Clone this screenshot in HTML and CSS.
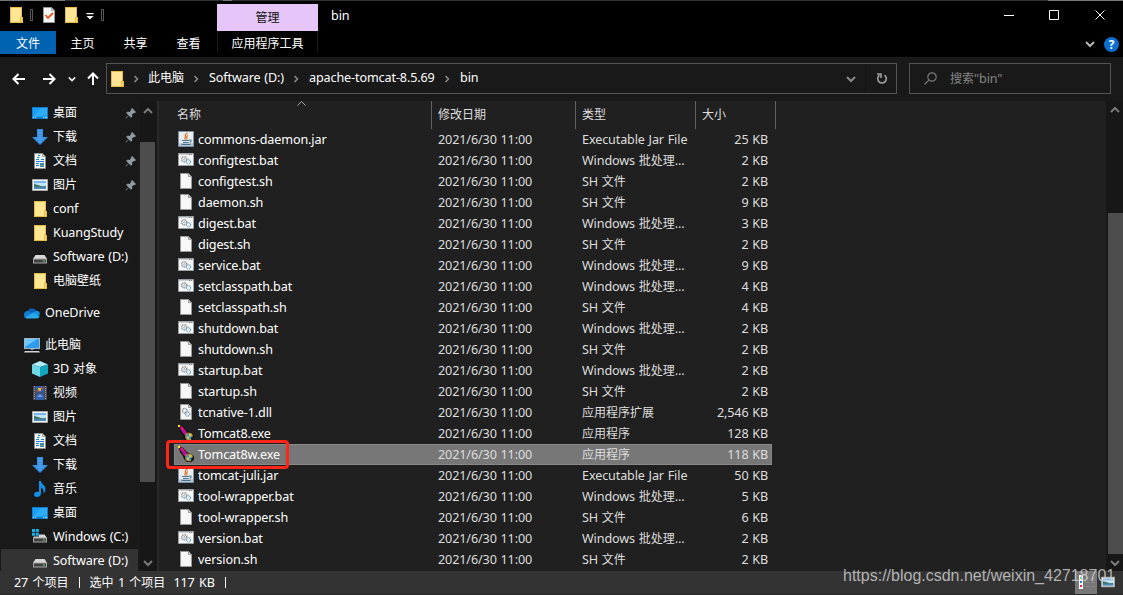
FILE: index.html
```html
<!DOCTYPE html>
<html lang="zh-CN">
<head>
<meta charset="utf-8">
<title>bin</title>
<link rel="stylesheet" href="styles.css">
</head>
<body>
<svg class="defs" width="0" height="0">
  <symbol id="folder" viewBox="0 0 16 16"><path fill="#e8bd3f" d="M2 0h12v10h1v6H2z"/><path fill="#ffe596" d="M3 1h10v9h-1v5H3z"/><path fill="#ffda65" d="M13 11h1v4h-1z"/></symbol>
  <symbol id="desktop" viewBox="0 0 16 16"><path fill="#0f7bd0" d="M0 2h16v12H0z"/><path fill="#16a0fb" d="M1 3h14v9H1z"/><path fill="#46b5ff" d="M9 3h6v7L1 12z" opacity=".5"/><path fill="#c9edff" d="M1 12h1v1H1zM3 12h1v1H3zM11 12h1v1h-1zM13 12h2v1h-2z"/></symbol>
  <symbol id="download" viewBox="0 0 16 16"><path fill="#338fe0" d="M5 0h6v8h5l-8 8-8-8h5z"/><path fill="#4aa2ef" d="M6 1h4v8h3l-5 5-5-5h3z" opacity=".6"/></symbol>
  <symbol id="document" viewBox="0 0 16 16"><path fill="#f7f8f9" stroke="#8b8f92" d="M2.500.500h8l3 3v12h-11z"/><path fill="#cdd1d4" stroke="#8b8f92" stroke-width=".7" d="M10.500.500v3h3z"/><path stroke="#1584d8" d="M6 2.500h2M5 4.500h2.500M4 6.500h3M9 6.500h3M4 8.500h8M4 10.500h3M4 12.500h3"/><path fill="#3e87a8" d="M8 10h4v4H8z"/><path stroke="#64a86d" d="M8 12.500h4"/></symbol>
  <symbol id="picture" viewBox="0 0 16 16"><path fill="#f4f4f4" stroke="#a9a9a9" d="M.500 2.500h15v11H.500z"/><path fill="#78b5ec" d="M2 4h12v8H2z"/><path fill="#c4e4fb" d="M3 6h11v3H2z"/><path fill="#3c7768" d="M2 7l4 1 4 1.500 4-.500v1.500H2z"/><path fill="#4d87b5" d="M2 10h12v2H2z"/></symbol>
  <symbol id="drive" viewBox="0 0 16 16"><path fill="#d8d8d8" d="M3.500 6h9L15 10H1z"/><path fill="#a6a6a6" d="M1 9.500h14v5H1z"/><path fill="#404040" d="M2 10.500h12v3H2z"/><path fill="#4ee05d" d="M11 11.500h2v1h-2z"/></symbol>
  <symbol id="windrive" viewBox="0 0 16 16"><path fill="#15b2ee" d="M0 0h3v3H0zM3.800 0h3v3h-3zM0 3.800h3v3H0zM3.800 3.800h3v3h-3z"/><path fill="#d8d8d8" d="M7 5.500h5.500L15 9H1l1-1.500h5z"/><path fill="#a6a6a6" d="M1 8.500h14v5H1z"/><path fill="#404040" d="M2 9.500h12v3H2z"/><path fill="#4ee05d" d="M11 10.500h2v1h-2z"/></symbol>
  <symbol id="onedrive" viewBox="0 0 16 16"><path fill="#0961b6" d="M3.500 6A5 5 0 0 1 12.500 6L8 10z"/><path fill="#127cd6" d="M0 10a3.600 3.600 0 0 1 3.500-4L10 9l-6 4.500H3.500A3.500 3.500 0 0 1 0 10z"/><path fill="#1490df" d="M8 8l4.500-2.200A3.700 3.700 0 0 1 16 9.500l-4 2z"/><path fill="#29a8ea" d="M1.200 12.500L9 7.800l6.500 3.200c0 1.600-1 2.500-2.500 2.500H3.500c-1 0-1.800-.400-2.300-1z"/></symbol>
  <symbol id="pc" viewBox="0 0 16 16"><path fill="#a6b6c1" d="M0 1h16v11H0z"/><path fill="#2c9bf0" d="M1 2h14v9H1z"/><path fill="#6cc8ff" d="M1 2h12L1 10z"/><path fill="#8b9aa5" d="M6.500 12h3v1h-3z"/><path fill="#cbd5dc" d="M1 14h14l1 1.500H0z"/></symbol>
  <symbol id="cube" viewBox="0 0 16 16"><path fill="#b2edf5" d="M0 3.500L8 0l8 3.500L8 6z"/><path fill="#6fd8e6" d="M0 3.500L8 6v10l-8-3.500z"/><path fill="#10a6bd" d="M16 3.500L8 6v10l8-3.500z"/></symbol>
  <symbol id="video" viewBox="0 0 16 16"><path fill="#47494c" d="M1 1h14v14H1z"/><path fill="#315fae" d="M4 1h8v6.500H4zM4 8.500h8V15H4z"/><path fill="#e2b92b" d="M6 3h3v3H6z"/><path fill="#c34a34" d="M9 2h2v2H9zM5 5h2v2H5z"/><path fill="#7898df" d="M5 12l3-3 3 3z"/><path stroke="#a0a0a0" stroke-dasharray="1 1" d="M2.500 1v14M13.500 1v14"/></symbol>
  <symbol id="music" viewBox="0 0 16 16"><path fill="#168fe9" d="M7 0h2c0 3 4.500 4 4.500 8 0 2-1 3.500-2 4.500.600-3-.500-5-2.500-6V12c0 2.500-1.500 4-4 4-2 0-3-1.200-3-2.500C2 11.500 4.500 10 7 11z"/></symbol>
  <symbol id="jar" viewBox="0 0 16 16"><path fill="#e8edf0" stroke="#7c91a3" d="M.500.500h15v15H.500z"/><path fill="#b9c8d2" d="M1 12h14v3H1z"/><path fill="none" stroke="#e27829" stroke-width="1.300" d="M9.500 2C5 4.500 9 5.500 6.500 8.500M10 4.500C7 6 10 6.500 8.500 8.500"/><path fill="none" stroke="#44718f" stroke-width="1.100" d="M4 9.500h7M11 9c3-.500 2.500 2 .500 2.500M5 11.500h5.500M3.500 13.500h9"/></symbol>
  <symbol id="bat" viewBox="0 0 16 16"><path fill="#f8f8f8" stroke="#9aa0a4" d="M.500 1.500h15v12H.500z"/><path fill="#c9ced1" d="M1 2h14v1H1z"/><path stroke="#7c8388" d="M11 2.500h1M13 2.500h1"/><g fill="none" stroke-dasharray="1 .600"><circle cx="6.300" cy="7.300" r="2.600" stroke="#777f85" stroke-width="1.300"/><circle cx="6.300" cy="7.300" r=".8" stroke="#8d969b"/><circle cx="10.500" cy="9.800" r="2.100" stroke="#68a9ca" stroke-width="1.300"/></g></symbol>
  <symbol id="sh" viewBox="0 0 16 16"><path fill="#f8f8f8" stroke="#999" d="M2.500.500h8l3 3v12h-11z"/><path fill="#ddd" stroke="#999" d="M10.500.500v3h3z"/></symbol>
  <symbol id="dll" viewBox="0 0 16 16"><path fill="#f4f4f4" stroke="#999" d="M2.500.500h8l3 3v12h-11z"/><path fill="#ddd" stroke="#999" d="M10.500.500v3h3z"/><g fill="none" stroke-dasharray="1 .600"><circle cx="6.700" cy="6.700" r="2.300" stroke="#777f85" stroke-width="1.300"/><circle cx="9.600" cy="10" r="2.100" stroke="#6e9db5" stroke-width="1.300"/></g></symbol>
  <symbol id="feather" viewBox="0 0 16 16"><path fill="#090909" d="M1 1l3 0 6 6 3 1 3 2.500v3l-3 2.500H9l-3-3-1-3-3-4z"/><path fill="#f0108c" d="M2 1.500h2L9 7.500l-1 3-2-1L2.500 4z"/><path fill="#3f24cf" d="M4 4l3 3 .500 2L5.500 7z"/><path fill="#ffea17" d="M0 0h2v2H0z"/><circle cx="11" cy="11.500" r="3.500" fill="#2d93d4" stroke="#b8952a"/><path fill="#efc42e" d="M11 9h2.500v2.500H11zM8.500 11.500H11V14H9.500z"/><path fill="#171717" d="M13 12.500l3-2v3L13.500 16z"/></symbol>
  <symbol id="pin" viewBox="0 0 12 12"><path fill="#8f9ba4" d="M7 1l4 4-1 1-1-.300-2 2 .200 2-1.200 1.100-2.300-2.300L1 11.500l-.500-.500 3-2.700L1.200 6l1.100-1.200 2 .200 2-2L6 2z"/></symbol>
  <symbol id="chev" viewBox="0 0 10 10"><path fill="none" stroke="currentColor" stroke-width="2" d="M1 3l4 4 4-4"/></symbol>
  <symbol id="right" viewBox="0 0 6 8"><path fill="none" stroke="#8b8b8b" stroke-width="1.500" d="M1.500 1l3 3-3 3"/></symbol>
  <symbol id="arrow" viewBox="0 0 14 12"><path fill="none" stroke="#fff" stroke-width="2" d="M6.500 1l-5 5 5 5M1.500 6H13"/></symbol>
</svg>

<div class="window">
  <div class="topline"><i class="seg seg-a"></i><i class="seg seg-b"></i><i class="seg seg-c"></i></div>
  <header class="titlebar">
    <div class="quick">
      <svg class="ic"><use href="#folder"/></svg><i class="bar"></i>
      <svg class="check" viewBox="0 0 12 16"><path fill="#f6f6f6" stroke="#969696" d="M.500.500h8l3 3v12H.500z"/><path fill="#ccc" stroke="#969696" stroke-width=".7" d="M8.500.500v3h3z"/><path fill="none" stroke="#e9531c" stroke-width="1.800" d="M2.500 8l2.500 3 5-5"/></svg>
      <svg class="ic quick-folder"><use href="#folder"/></svg>
      <svg class="custom" viewBox="0 0 8 7"><path fill="#fff" d="M.500 0h7v1.200h-7zM.500 3h7L4 6.500z"/></svg><i class="bar"></i>
    </div>
    <div class="context">管理</div>
    <div class="title" data-mix>bin</div>
    <svg class="controls" viewBox="0 0 104 12"><path fill="none" stroke="#fff" d="M1 6.500h10M46.500 1.500h9v9h-9zM92.500 1.500l9 9M101.500 1.500l-9 9"/></svg>
  </header>
  <nav class="tabs">
    <span class="tab file">文件</span><span class="tab">主页</span><span class="tab">共享</span><span class="tab">查看</span><span class="tab tools">应用程序工具</span>
    <span class="tabs-end"><svg class="chev"><use href="#chev"/></svg><b class="help">?</b></span>
  </nav>
  <div class="address-row">
    <div class="nav">
      <svg class="arrow"><use href="#arrow"/></svg><svg class="arrow forward"><use href="#arrow"/></svg><svg class="chev small"><use href="#chev"/></svg><svg class="arrow up"><use href="#arrow"/></svg>
    </div>
    <div class="address">
      <svg class="ic"><use href="#folder"/></svg>
      <svg class="sep sep1"><use href="#right"/></svg><span class="crumb c1">此电脑</span>
      <svg class="sep"><use href="#right"/></svg><span class="crumb c2" data-mix>Software (D:)</span>
      <svg class="sep"><use href="#right"/></svg><span class="crumb c3" data-mix>apache-tomcat-8.5.69</span>
      <svg class="sep"><use href="#right"/></svg><span class="crumb" data-mix>bin</span>
      <span class="address-end"><svg class="chev dim"><use href="#chev"/></svg><span class="refresh"><svg viewBox="0 0 12 13"><path fill="none" stroke="#9b9b9b" stroke-width="1.700" d="M8.500 3.200a4.300 4.300 0 1 1-5 0M1 2h4v4"/></svg></span></span>
    </div>
    <div class="search"><svg viewBox="0 0 13 13"><path fill="none" stroke="#777" stroke-width="1.200" d="M4.700 8.300L.500 12.500"/><circle cx="8" cy="5" r="4.200" fill="none" stroke="#777" stroke-width="1.200"/></svg><span data-mix>搜索"bin"</span></div>
  </div>
  <div class="body">
    <aside class="side"><div class="tree" id="tree"></div></aside>
    <div class="scroll side-scroll"><svg class="chev thin flip"><use href="#chev"/></svg><i class="thumb"></i><svg class="chev thin"><use href="#chev"/></svg></div>
    <main class="main">
      <div class="head"><span class="h-name">名称<svg class="sort" viewBox="0 0 9 5"><path fill="none" stroke="#aaa" d="M.500 4.500l4-4 4 4"/></svg></span><span class="h-date">修改日期</span><span class="h-type">类型</span><span class="h-size">大小</span></div>
      <div id="rows"></div>
      <div class="mark"></div>
    </main>
    <div class="scroll main-scroll"><svg class="chev thin flip"><use href="#chev"/></svg><i class="thumb"></i><svg class="chev thin"><use href="#chev"/></svg></div>
  </div>
  <footer class="status"><span data-mix>27 个项目</span><i></i><span class="picked" data-mix>选中 1 个项目</span><span class="total" data-mix>117 KB</span><i></i>
    <div class="views"><span class="view on"><svg viewBox="0 0 18 14"><path fill="#fff" d="M0 0h4v14H0z"/><path fill="#48a060" d="M1 2h2v2H1z"/><path fill="#2680e0" d="M1 6h2v2H1z"/><path fill="#d92d2d" d="M1 10h2v2H1z"/><path stroke="#8a8a8a" d="M6 3.500h4M12 3.500h4M6 7.500h4M12 7.500h4M6 11.500h4M12 11.500h4"/></svg></span><span class="view"><svg class="ic"><use href="#picture"/></svg></span></div>
  </footer>
  <div class="watermark">https://blog.csdn.net/weixin_42718701</div>
</div>
<script src="app.js"></script>
</body>
</html>
```
FILE: styles.css
```css
* { box-sizing: border-box; }
body { margin: 0; background: #191919; color: #fff; font: 12px/20px "Noto Sans CJK SC", sans-serif; overflow: hidden; }
svg { display: block; flex: none; }
.defs { position: absolute; }
.latin { font-family: "Noto Sans", sans-serif; font-size: 12.6px; letter-spacing: -.12px; word-spacing: .6px; white-space: pre; }
.ic { width: 16px; height: 16px; }
.window { position: relative; width: 1123px; height: 595px; display: flex; flex-direction: column; }
.topline { display: flex; height: 1px; background: #303030; }
.seg { height: 1px; background: #777; }
.seg-a { width: 65px; }
.seg-b { width: 9px; margin-left: 158px; }
.seg-c { width: 75px; margin-left: auto; }
.titlebar { height: 30px; background: #000; display: flex; align-items: stretch; }
.quick { width: 217px; padding: 0 0 2px 8px; display: flex; align-items: center; }
.bar { width: 3px; height: 12px; border: 1px solid #555; margin-left: 6px; }
.check { width: 12px; height: 16px; margin-left: 10px; }
.quick-folder { margin-left: 8px; }
.custom { width: 8px; height: 7px; margin: 3px 0 0 7px; }
.quick .custom + .bar { margin-left: 7px; }
.context { width: 101px; margin-top: 3px; height: 27px; background: #e6c6f8; color: #111; text-align: center; line-height: 26px; }
.title { margin-left: 13px; line-height: 27px; }
.controls { width: 104px; height: 12px; margin: 8px 16px 0 auto; }
.tabs { height: 26px; background: #000; display: flex; }
.tab { width: 53px; height: 23px; text-align: center; line-height: 23px; }
.file { width: 56px; background: #0063b1; }
.tools { width: 101px; margin-left: 2px; height: 21px; border: solid #1c1c1c; border-width: 0 1px; }
.tabs-end { margin-left: auto; display: flex; align-items: center; padding-right: 4px; gap: 9px; }
.chev { width: 10px; height: 10px; color: #b5b5b5; }
.help { width: 15px; height: 15px; border-radius: 50%; background: #0b6dce; font: bold 12px/15px "Open Sans", sans-serif; text-align: center; }
.address-row { height: 44px; padding: 6px 12px 7px 0; display: flex; align-items: stretch; }
.nav { width: 106px; display: flex; align-items: center; padding-left: 12px; }
.arrow { width: 14px; height: 12px; }
.forward { transform: scaleX(-1); margin-left: 16px; }
.small { width: 8px; height: 8px; color: #eee; margin-left: 12px; }
.up { transform: rotate(90deg); margin-left: 10px; }
.address { width: 791px; border: 1px solid #535353; display: flex; align-items: center; padding-left: 2px; }
.sep { width: 6px; height: 8px; margin: 0 10px; }
.sep1 { margin-left: 8px; margin-right: 9px; }
.crumb { white-space: nowrap; line-height: 26px; height: 29px; }
.c1 { width: 35px; }
.c2 { width: 74px; }
.c3 { width: 125px; }
.address-end { margin-left: auto; display: flex; align-items: center; align-self: stretch; }
.dim { color: #8a8a8a; }
.refresh { width: 31px; align-self: stretch; border-left: 1px solid #141414; margin-left: 9px; padding: 8px 0 0 10px; }
.refresh svg { width: 12px; height: 13px; }
.search { width: 202px; margin-left: 12px; border: 1px solid #535353; color: #858585; display: flex; align-items: center; padding-left: 14px; gap: 13px; }
.search svg { width: 13px; height: 13px; margin-bottom: 1px; }
.body { height: 470px; display: flex; }
.side { width: 140px; overflow: hidden; }
.node { height: 24px; padding: 0 2px 0 32px; display: flex; align-items: center; gap: 5px; white-space: nowrap; }
.node.root { padding-left: 24px; margin-top: 8px; margin-bottom: 8px; }
.node.root.pc { margin-bottom: 0; }
.node.on { background: #333; margin-left: 1px; padding-left: 31px; margin-right: 2px; }
.node .label { flex: 1; height: 22px; }
.node .pin { margin-right: 1px; }
.pin { width: 12px; height: 12px; }
.scroll { display: flex; flex-direction: column; align-items: center; background: #171717; }
.side-scroll { width: 19px; padding: 5px 2px 3px 0; border-right: 2px solid #2a2a2a; }
.thin { color: #7b7b7b; }
.flip { transform: scaleY(-1); }
.thumb { width: 15px; background: #4d4d4d; }
.side-scroll .thumb { height: 340px; margin: 26px 0 auto; }
.main { position: relative; width: 947px; background: #202020; color: #dedede; }
.head { height: 28px; display: flex; line-height: 25px; }
.head span { border-right: 1px solid #636363; }
.h-name { width: 273px; padding-left: 18px; position: relative; }
.sort { position: absolute; left: 138px; top: 0; width: 9px; height: 5px; }
.h-date { width: 144px; padding-left: 6px; }
.h-type { width: 120px; padding-left: 6px; }
.h-size { width: 80px; padding-left: 6px; }
.row { height: 21px; margin-left: 15px; width: 598px; padding-left: 4px; display: flex; align-items: flex-start; white-space: nowrap; }
.row .ic { margin-top: 2px; }
.row.on { background: #777; outline: 1px solid #888; outline-offset: -1px; }
.row > span { line-height: 19px; }
.row span { line-height: 19px; }
.row .name { width: 240px; margin-left: 4px; color: #fff; }
.row .date { width: 144px; }
.row .type { width: 110px; }
.row .size { width: 76px; text-align: right; }
.mark { position: absolute; left: 7px; top: 339px; width: 123px; height: 29px; border: 3px solid #ff2519; border-radius: 4px; }
.main-scroll { width: 17px; padding: 4px 0 3px; }
.main-scroll .thumb { height: 341px; margin: 98px 0 auto 1px; }
.status { height: 24px; background: #333; border-bottom: 1px solid #292929; display: flex; align-items: center; padding-left: 14px; }
.status i { width: 1px; height: 11px; background: #fff; margin-left: 10px; }
.status .latin { word-spacing: 1.2px; }
.picked { margin-left: 10px; }
.total { margin-left: 8px; }
.views { display: flex; margin-left: auto; align-self: stretch; padding-right: 4px; }
.view { width: 22px; padding: 3px; }
.view.on { background: #777; padding: 4px 4px; }
.view.on svg { width: 18px; height: 14px; }
.view .ic { width: 14px; height: 14px; margin: 1px 0 0 1px; }
.watermark { position: absolute; left: 843px; top: 566px; font: 16px/20px "Liberation Sans", sans-serif; color: rgba(210, 210, 210, .82); white-space: nowrap; }
```
FILE: app.js
```js
const tree = [
  ['desktop', '桌面', 'pin'], ['download', '下载', 'pin'], ['document', '文档', 'pin'], ['picture', '图片', 'pin'],
  ['folder', 'conf'], ['folder', 'KuangStudy'], ['drive', 'Software (D:)'], ['folder', '电脑壁纸'],
  ['onedrive', 'OneDrive', 'root'], ['pc', '此电脑', 'root pc'],
  ['cube', '3D 对象'], ['video', '视频'], ['picture', '图片'], ['document', '文档'], ['download', '下载'],
  ['music', '音乐'], ['desktop', '桌面'], ['windrive', 'Windows (C:)'], ['drive', 'Software (D:)', 'on']
];
const types = { jar: 'Executable Jar File', bat: 'Windows 批处理...', sh: 'SH 文件', dll: '应用程序扩展', exe: '应用程序' };
const files = [
  ['commons-daemon.jar', '25'], ['configtest.bat', '2'], ['configtest.sh', '2'], ['daemon.sh', '9'], ['digest.bat', '3'],
  ['digest.sh', '2'], ['service.bat', '9'], ['setclasspath.bat', '4'], ['setclasspath.sh', '4'], ['shutdown.bat', '2'],
  ['shutdown.sh', '2'], ['startup.bat', '2'], ['startup.sh', '2'], ['tcnative-1.dll', '2,546'], ['Tomcat8.exe', '128'],
  ['Tomcat8w.exe', '118'], ['tomcat-juli.jar', '50'], ['tool-wrapper.bat', '5'], ['tool-wrapper.sh', '6'],
  ['version.bat', '2'], ['version.sh', '2']
];
// Latin runs get their own face and size beside the Chinese text.
const mix = text => text.replace(/[\x20-\x7e]+/g, '<span class="latin">$&</span>');
const icon = (id, cls = 'ic') => `<svg class="${cls}"><use href="#${id}"/></svg>`;

document.getElementById('tree').innerHTML = tree.map(([id, label, kind = '']) =>
  `<div class="node ${kind === 'pin' ? '' : kind}">${icon(id)}<span class="label">${mix(label)}</span>${kind === 'pin' ? icon('pin', 'pin') : ''}</div>`).join('');
document.getElementById('rows').innerHTML = files.map(([name, size]) => {
  const ext = name.split('.').pop();
  return `<div class="row${name === 'Tomcat8w.exe' ? ' on' : ''}">${icon(ext === 'exe' ? 'feather' : ext)}<span class="name">${mix(name)}</span><span class="date">${mix('2021/6/30 11:00')}</span><span class="type">${mix(types[ext])}</span><span class="size">${mix(size + ' KB')}</span></div>`;
}).join('');
document.querySelectorAll('[data-mix]').forEach(el => { el.innerHTML = mix(el.textContent); });
```
